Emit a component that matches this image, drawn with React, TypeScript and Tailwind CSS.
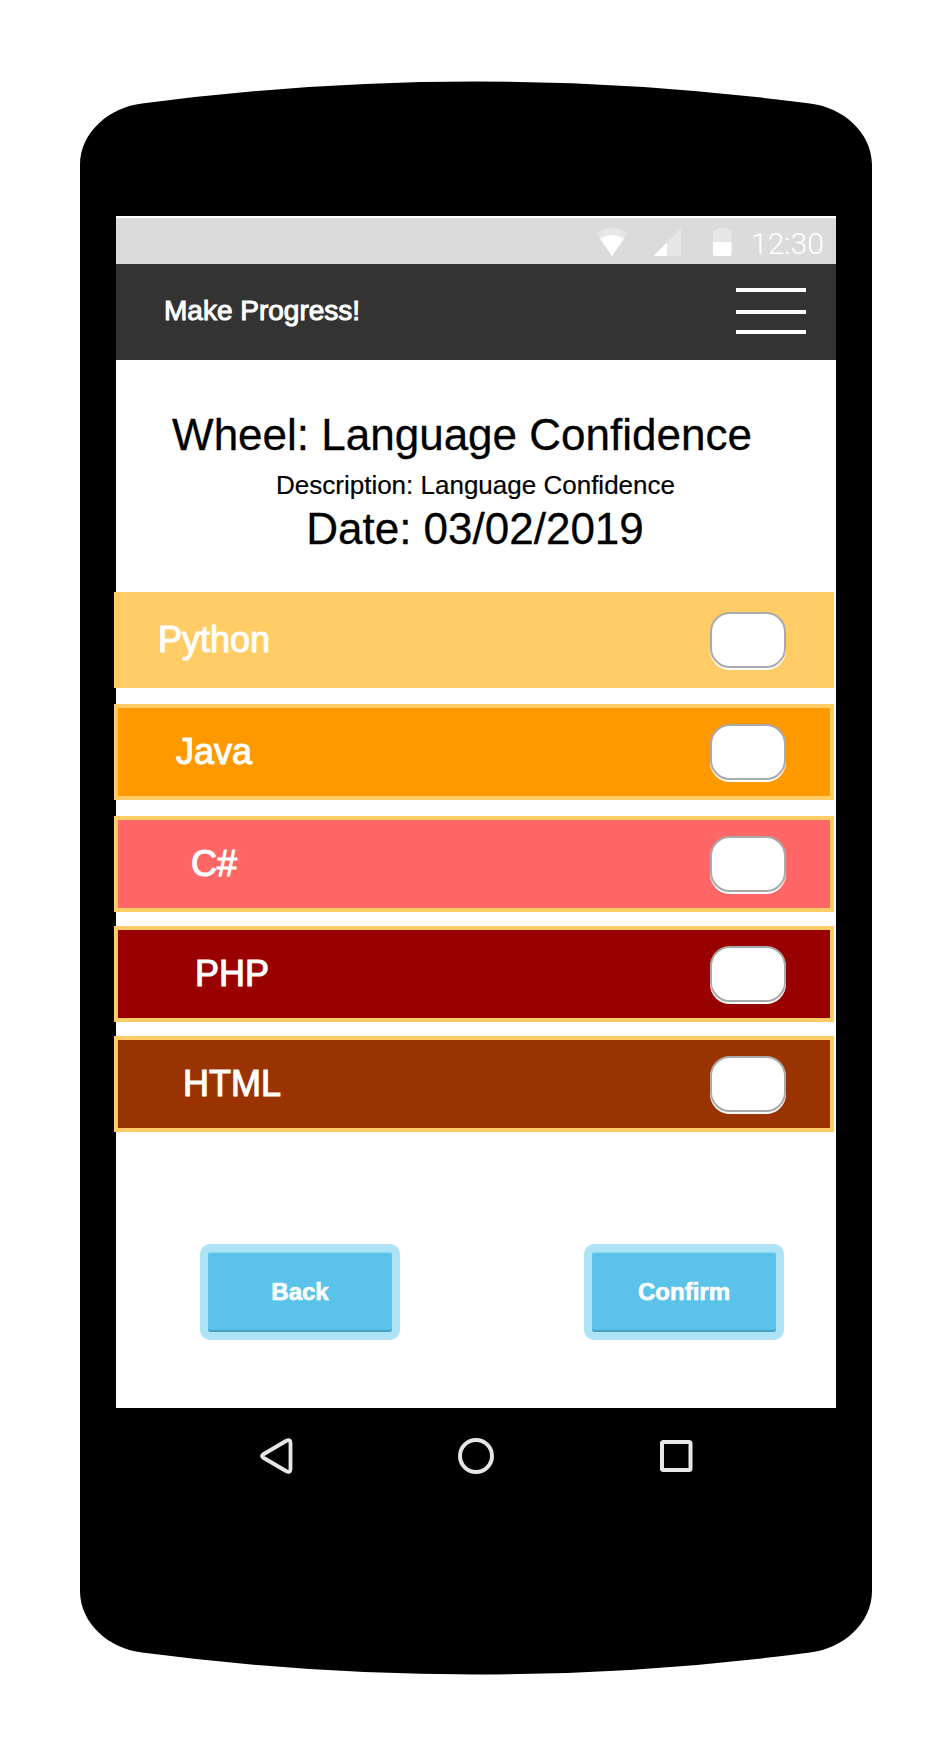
const rows = [
  { label: "Python", row: "bg-[#ffcc66]", text: "pl-[40px]", gap: "mb-4" },
  { label: "Java", row: "bg-[#ff9900]", text: "pl-[58px]", gap: "mb-4" },
  { label: "C#", row: "bg-[#ff6666]", text: "pl-[73px]", gap: "mb-3.5" },
  { label: "PHP", row: "bg-[#990000]", text: "pl-[77px]", gap: "mb-3.5" },
  { label: "HTML", row: "bg-[#993300]", text: "pl-[65px]", gap: "" },
];

function DeviceShell() {
  return (
    <svg className="absolute inset-0" width="952" height="1756" viewBox="0 0 952 1756">
      <path
        d="M80 165C80 132 110 107 142 103.5Q476 59.5 810 103.5C842 107 872 132 872 165V1591C872 1624 842 1649 810 1652.5Q476 1696.5 142 1652.5C110 1649 80 1624 80 1591Z"
        fill="#000"
      />
    </svg>
  );
}

function StatusBar() {
  return (
    <div className="mt-0.5 flex h-[46px] shrink-0 bg-[#dbdbdb]">
      <svg width="172" height="46" viewBox="576 218 172 46" className="ml-[460px] shrink-0">
        <path d="M596 233Q612 223 628 233L612 256Z" fill="#e6e6e6" />
        <path d="M600 238.500Q612 231.500 624 238.500L612 256Z" fill="#fff" />
        <path d="M681 228.500V256H653.500Z" fill="#e6e6e6" />
        <path d="M667 242.500V256H653.500Z" fill="#fff" />
        <path d="M713 232q0-2 2-2h2v-2h10v2h2.500q2 0 2 2v10H713Z" fill="#e6e6e6" />
        <path d="M713 242h18.500v12q0 2-2 2h-14.500q-2 0-2-2Z" fill="#fff" />
      </svg>
      <span className="ml-[3px] pt-[8px] font-['Roboto'] text-[30px] font-light leading-[35px] text-white">12:30</span>
    </div>
  );
}

function Toggle() {
  return (
    <button
      aria-label="Toggle"
      className="mr-11 h-14 w-[76px] rounded-[20px] border-2 border-[#aaa] bg-white shadow-[0_2px_0_#fff]"
    />
  );
}

function ActionButton({ children }: { children: string }) {
  return (
    <button className="h-24 w-[200px] rounded-[10px] bg-[#aee2f5] p-2 text-2xl font-bold text-white">
      <span className="flex h-20 items-center justify-center rounded-[3px] bg-[#5bc2ea] pb-px shadow-[inset_0_1px_1px_#8fd6f1,inset_0_-2px_1px_#49a0c1] [-webkit-text-stroke:0.7px_white]">
        {children}
      </span>
    </button>
  );
}

export default function App() {
  return (
    <div className="relative h-[1756px] w-[952px] bg-white pl-[116px] pt-[216px] font-['Liberation_Sans',sans-serif]">
      <DeviceShell />
      <main className="relative flex h-[1192px] w-[720px] flex-col bg-white">
        <StatusBar />
        <header className="flex h-24 shrink-0 items-center justify-between bg-[#333] pl-12 pr-[30px] text-white">
          <h1 className="pb-[3px] text-[28px] [-webkit-text-stroke:1px_white]">Make Progress!</h1>
          <button aria-label="Menu" className="mb-0.5 flex h-[46px] w-[70px] flex-col">
            <span className="h-1 w-full bg-white" />
            <span className="mt-[18px] h-1 w-full bg-white" />
            <span className="mt-4 h-1 w-full bg-white" />
          </button>
        </header>
        <section className="flex h-[232px] shrink-0 flex-col items-center pt-[50px] text-black">
          <h2 className="mr-[28px] text-[44px] leading-[50px] [-webkit-text-stroke:0.3px_black]">Wheel: Language Confidence</h2>
          <p className="mr-px mt-[10px] text-[26px] leading-[30px] [-webkit-text-stroke:0.2px_black]">
            Description: Language Confidence
          </p>
          <p className="mr-0.5 mt-[4px] text-[44px] leading-[50px] [-webkit-text-stroke:0.3px_black]">Date: 03/02/2019</p>
        </section>
        <ul className="-ml-0.5 w-[720px]">
          {rows.map(({ label, row, text, gap }) => (
            <li key={label} className={`flex h-24 items-center justify-between border-4 border-[#ffcc66] ${row} ${gap}`}>
              <span className={`${text} text-4xl text-white [-webkit-text-stroke:1.1px_white]`}>{label}</span>
              <Toggle />
            </li>
          ))}
        </ul>
        <div className="mt-28 flex justify-between pl-[84px] pr-[52px]">
          <ActionButton>Back</ActionButton>
          <ActionButton>Confirm</ActionButton>
        </div>
      </main>
      <nav className="relative flex h-24 w-[720px] items-center justify-between pl-[142px] pr-[142px]">
        <svg width="36" height="40" viewBox="258 1436 36 40" fill="none" stroke="#e6e6e6" strokeWidth="3.800" strokeLinejoin="round">
          <path d="M263 1454.500Q261 1456 263 1457.500L286 1471Q290.500 1473.500 290.500 1469V1443Q290.500 1438.500 286 1441L263 1454.500Z" />
        </svg>
        <svg width="40" height="40" viewBox="0 0 40 40" fill="none" stroke="#e6e6e6" strokeWidth="4">
          <circle cx="20" cy="20" r="16" />
        </svg>
        <svg width="36" height="40" viewBox="658 1436 36 40" fill="none" stroke="#e6e6e6" strokeWidth="4">
          <rect x="662" y="1442" width="28.500" height="28" rx="1.500" />
        </svg>
      </nav>
    </div>
  );
}
